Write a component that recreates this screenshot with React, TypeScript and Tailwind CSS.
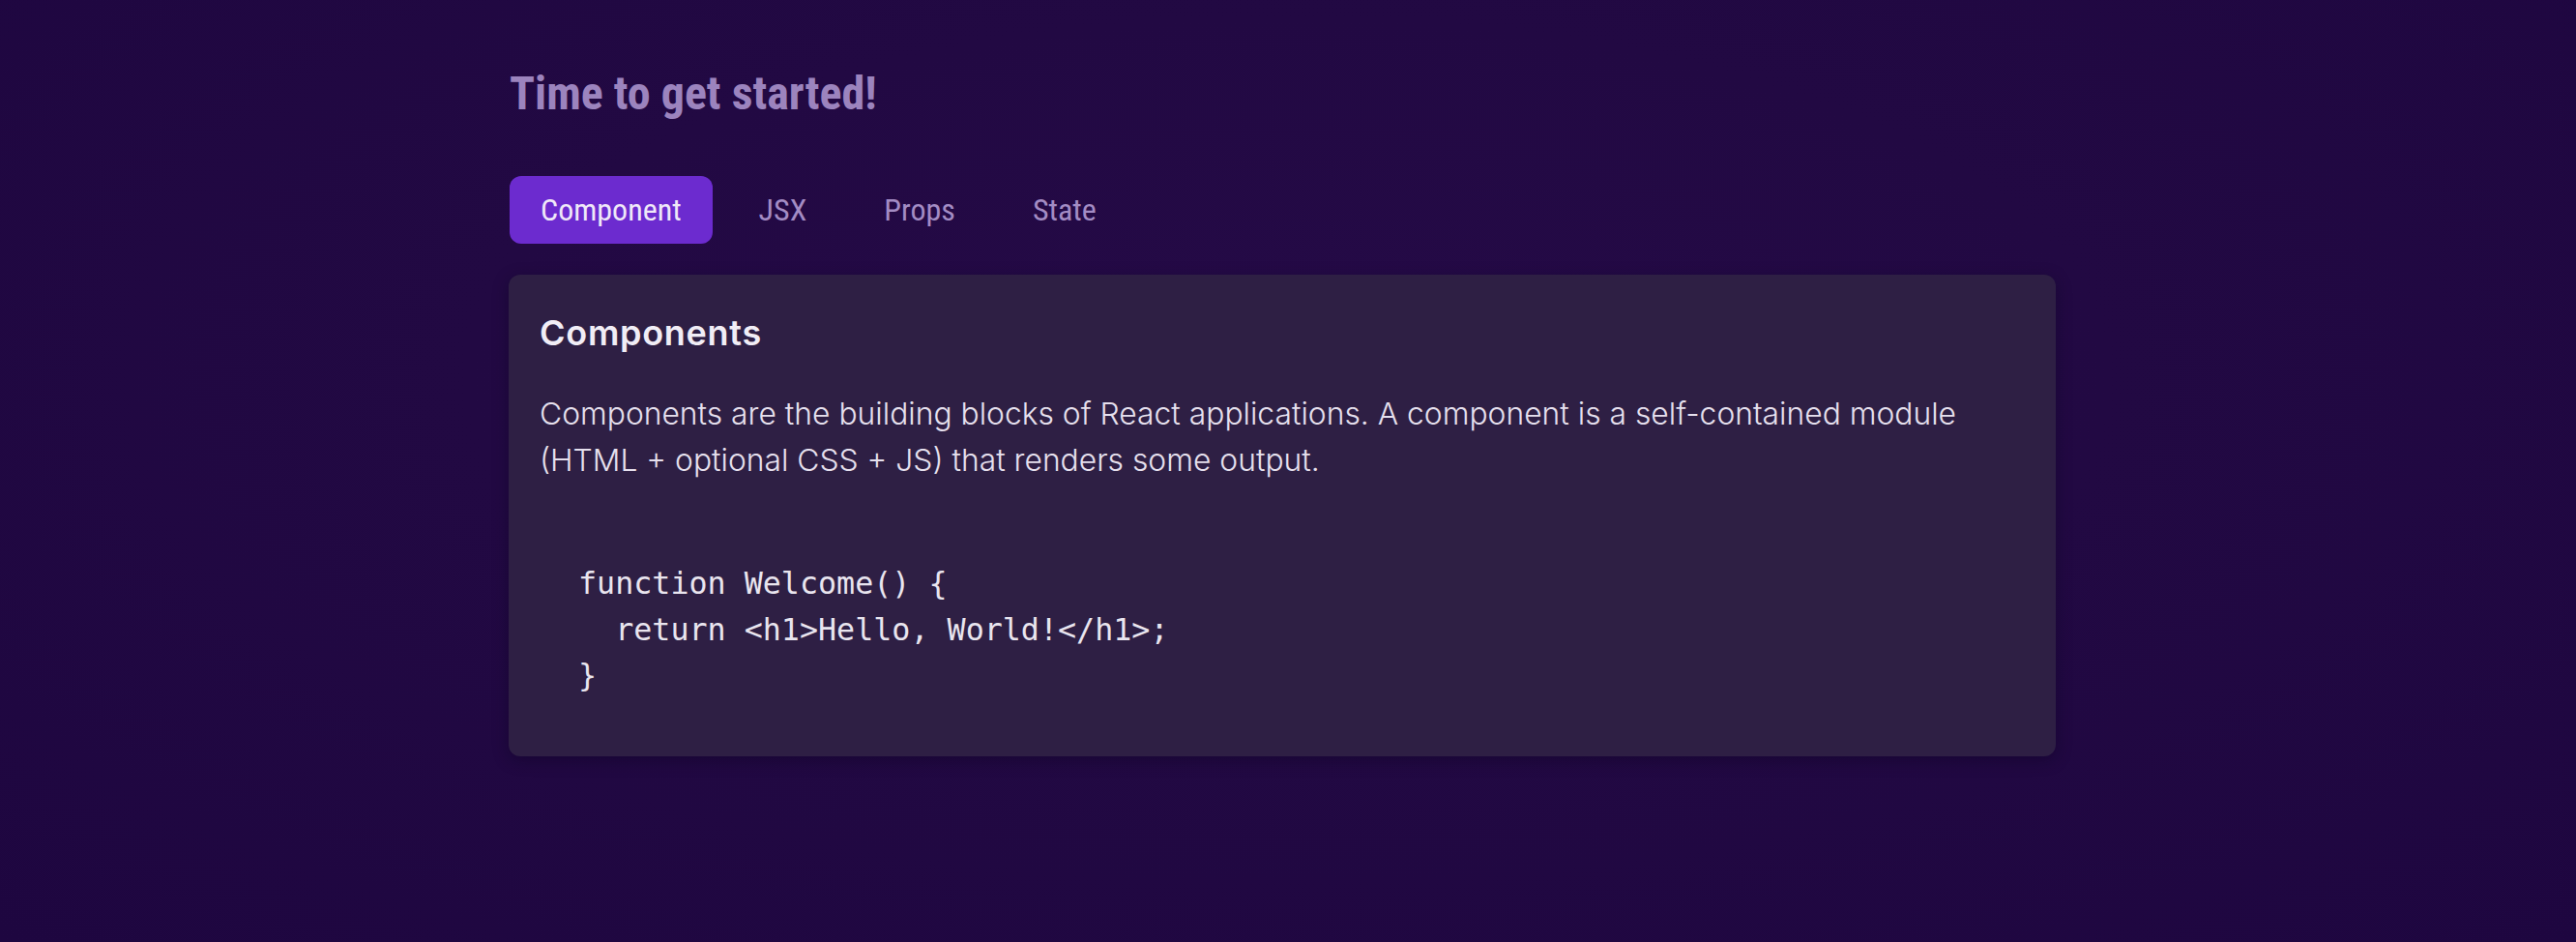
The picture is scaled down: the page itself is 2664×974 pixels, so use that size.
const TABS = ['Component', 'JSX', 'Props', 'State'];

const CODE = `function Welcome() {
  return <h1>Hello, World!</h1>;
}`;

export default function App() {
  const active = 'Component';

  return (
    <div className="min-h-screen w-full bg-[radial-gradient(ellipse_at_50%_40%,#250a47_0%,#220943_45%,#1e0640_100%)]">
      <div className="flex justify-center pr-[12px]">
        <div className="w-[1600px] pt-[69px]">
          <h1 className="font-['Roboto_Condensed',Roboto,sans-serif] text-[48px] leading-[56px] font-bold text-[#9c84be] pl-px">
            Time to get started!
          </h1>

          <div className="mt-[57px] flex gap-4 pl-px">
            {TABS.map((t) => (
              <button
                key={t}
                className={
                  t === active
                    ? "h-[70px] px-[32px] rounded-[12px] bg-[#6c2bcf] text-[#efe8f8] font-['Roboto_Condensed',Roboto,sans-serif] text-[32px]"
                    : "h-[70px] px-[32px] rounded-[12px] text-[#a38cc4] font-['Roboto_Condensed',Roboto,sans-serif] text-[32px]"
                }
              >
                {t}
              </button>
            ))}
          </div>

          <div className="mt-[32px] rounded-[12px] bg-[#2e1f44] px-[32px] pt-[39px] pb-[59px] shadow-[0_4px_16px_rgba(10,0,25,0.35)]">
            <h2 className="font-['Inter',sans-serif] text-[36px] leading-[42px] font-semibold tracking-[0.02em] text-[#f1edf6]">
              Components
            </h2>
            <p className="mt-[39px] font-['Inter',sans-serif] text-[31.8px] leading-[48px] font-light text-[#e6e0ee]">
              Components are the building blocks of React applications. A component is a self-contained module
              (HTML + optional CSS + JS) that renders some output.
            </p>
            <pre className="mt-[80px] pl-[40px] font-['DejaVu_Sans_Mono',monospace] text-[31.7px] leading-[47.5px] text-[#e9e5ef]">
              {CODE}
            </pre>
          </div>
        </div>
      </div>
    </div>
  );
}
